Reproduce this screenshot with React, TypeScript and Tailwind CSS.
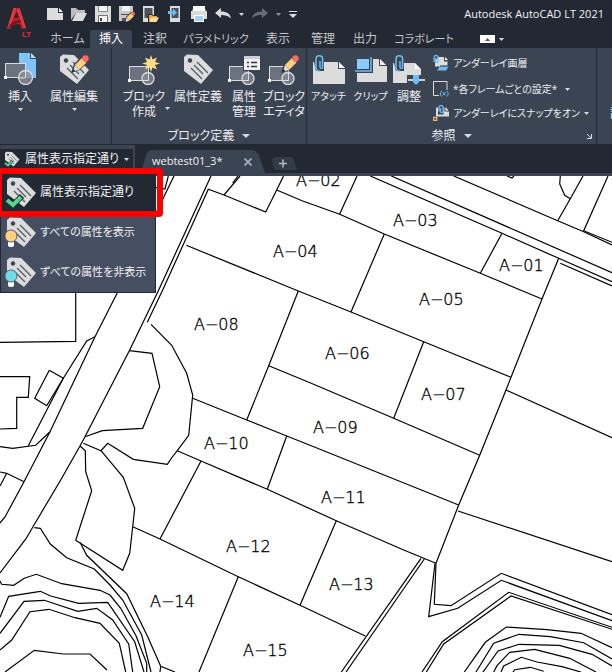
import type { ReactNode } from "react";

const tabs = [
  { label: "ホーム", width: "w-[45px]", text: "text-xs" },
  { label: "挿入", width: "w-[42px]", text: "text-xs", active: true },
  { label: "注釈", width: "w-[46px]", text: "text-xs" },
  { label: "パラメトリック", width: "w-[76px]", text: "text-[11px]" },
  { label: "表示", width: "w-12", text: "text-xs" },
  { label: "管理", width: "w-[42px]", text: "text-xs" },
  { label: "出力", width: "w-[42px]", text: "text-xs" },
  { label: "コラボレート", width: "w-[76px]", text: "text-[11px]" },
];

const lots = [
  { name: "A−02", x: 296, y: 186 },
  { name: "A−03", x: 393, y: 226 },
  { name: "A−01", x: 499, y: 271 },
  { name: "A−04", x: 273, y: 257 },
  { name: "A−05", x: 419, y: 305 },
  { name: "A−06", x: 325, y: 359 },
  { name: "A−08", x: 194, y: 330 },
  { name: "A−07", x: 421, y: 400 },
  { name: "A−09", x: 313, y: 433 },
  { name: "A−10", x: 204, y: 449 },
  { name: "A−11", x: 321, y: 503 },
  { name: "A−12", x: 226, y: 552 },
  { name: "A−13", x: 329, y: 590 },
  { name: "A−14", x: 150, y: 607 },
  { name: "A−15", x: 243, y: 656 },
];

// Roads and buildings west of the lots
const roads = [
  "211,176 158.7,290 129.3,350.7 85,436.7 80,446 60.7,480 33,526.7 26,538.7 0,573",
  "147.3,322.3 162.7,290 208.3,189.3 224,195 265.7,212 276.7,190 283.5,176",
  "224,195 240,176",
  "232.7,183 238,176",
  "174,176 116.7,294 95,336.7 50,431.7 24,481.7 5,517 0,523",
  "168.3,176 165,189 156,187.7",
  "95,336.7 86.7,341 63.3,378.3 28.3,445.7",
  "75.7,290 75.7,341.3 0,342.3",
  "0,376.7 29.7,376.7 28.3,397.3 16.7,397.3 16.7,428.3 0,429",
  "49.3,370.3 63.3,378.3 46.7,405.7 34.7,398.3 49.3,370.3",
  "0,446.7 12.7,448.3 35.7,445.3 50,431.7",
  "0,472 6.7,473.3 24,481.7",
  "6.7,473.3 0,486",
  "129.3,350.7 152,353.3 159.7,386.7 142.7,428.3 102.3,430.7 85,436.7",
  "151,324.3 171.7,345.3 186.7,373.3 192.7,395 188.7,435.3 177.3,450.7 172.3,457 167.3,464.3 133.3,459.3 107.7,443.3 101,450.7 83.3,443.3",
  "101,450.7 123.3,477.3 134.7,508.3 132.7,526.7 129.7,553.3 122.7,570.3 75.7,540.3 91.7,490.7 85.7,471.7 85.3,450.7 80,446",
];

const boundaries = [
  "276.7,190 302,200.7 339.7,214.3 384.3,234 480.3,273.3 542,299",
  "186.3,245.3 298.3,291 351,312 423.7,341.7 511,377.3",
  "384.3,234 351,312",
  "502,233.3 480.3,273.3",
  "357,176 339.7,214",
  "370.3,176 502,233.3 558.7,258.3 612,281.7",
  "391.3,176 612,272.7",
  "560.3,263.3 612,286",
  "453.7,176 557.7,220.7 583.7,231.7 612,245",
  "608,176 583.7,230.7 612,242.3",
  "557.7,220.7 570.3,198.7 583,176",
  "560.3,176 559.7,184 564.7,195.3 570.3,198.7",
  "507,176 512,178 514,176",
  "558.7,258.3 542,299 506,390 479.7,455.3 458.7,505 436,563.3",
  "298.3,291 268.7,365.7 246.7,420",
  "268.7,365.7 310,382.7 393.7,418.3 479.7,455.3",
  "423.7,341.7 393.7,418.3",
  "192.7,398.3 246.7,420 286.7,436 310,445.3 458.7,505",
  "286.7,436 267.3,489.3",
  "177.3,450.7 201,461 267.3,489.3 336.3,520.7 403.7,550 436,563.3",
  "201,461 160,539",
  "132.7,526.7 160,539 238.3,576.7 300,605.3 365.3,636",
  "238.3,576.7 199,672",
  "336.3,520.7 300,605.3",
  "506,390 612,437.7",
  "458,511 612,561.7",
  "421,558.3 341.3,672",
  "424.3,559 346,672",
];

const contours = [
  "436,563.3 434.3,604.3 451,605.7 501.3,573.3 612,614.7",
  "435,563.3 428.7,616.7 457.7,608.3 501.3,580.3 612,620.7",
  "422,672 442.3,641.7 508.7,592.3 612,627.3",
  "426.3,672 443.7,644 511,596 612,629.3",
  "464.3,672 485.3,642.3 506.3,627 547,629.7 581,633.3 612,647.7",
  "476,672 493.7,643.3 519,634.3 550.3,636.7 583.7,642.7 612,659",
  "483,672 498,651 519,644.3 559.3,645.3 592,654.3 612,666",
  "493.7,672 497,665.7 509.7,652.3 534.7,649.3 569.7,658.3 596,672",
  "501,672 503.7,666 521.3,657.3 537,662 562,666.7 581,672",
  "513,672 514.7,669.7 530.3,667.3 543.7,671.3",
  "34.3,527.7 40.3,528.3 50.3,544 66.7,557.7 94.3,569 110,585 122.7,600 141.7,635 151,672",
  "80,542.3 86.7,555.3 126.7,593.7 147.7,636.7 160.7,666.3 175,672",
  "160.7,666.3 160,672",
  "0,581 1.7,584.3 13.7,585.3 24.3,578.3 36.3,574.3 61.7,583.7 100,590.3 110,595 120.7,608.3 136,635.7 146.7,663.3 146.7,672",
  "0,617.3 8.7,596.3 40.3,591.3 50.7,596 78.7,603.3 107.7,602.3 134.7,641.7 144,672",
  "0,633.3 24,601.3 44.3,600.3 77.7,611.3 96.7,608.3 112.7,620 128.7,644 132.7,672",
  "0,650 11.7,640 30,611.7 49,609.3 75,617.7 100,623.3 119.3,643.3 125.7,672",
  "5,672 34.3,650.3 63.3,654 90,654 107,670",
];

const Caret = ({ className = "" }: { className?: string }) => (
  <svg viewBox="0 0 5 3" className={`w-[5px] h-[3px] shrink-0 fill-[#d8dadd] ${className}`}>
    <path d="M0 0h5L2.5 3z" />
  </svg>
);

const Icon = ({ children, className = "w-8 h-8" }: { children: ReactNode; className?: string }) => (
  <svg viewBox="0 0 32 32" fill="none" className={`shrink-0 ${className}`} aria-hidden="true">
    {children}
  </svg>
);

const BlockShape = () => (
  <>
    <rect x="1.5" y="13.5" width="19" height="14" fill="#6b7280" stroke="#dcdcdc" />
    <circle cx="20" cy="25.5" r="6" fill="#8a8f9a" fillOpacity=".75" stroke="#dcdcdc" strokeWidth="1.3" />
    <path d="M20.5 19v8.500H14" stroke="#dcdcdc" />
    <rect x="0" y="26" width="3" height="3" fill="#fff" />
  </>
);

const Pencil = () => (
  <>
    <path d="M13 20l3-9 9-9 6 6-9 9z" fill="#3b4453" />
    <path d="M17 12l7-7 4.500 4.500-7 7z" fill="#ffd07a" />
    <path d="M17 12l4.500 4.500-6.500 2.500z" fill="#dcdcdc" />
    <path d="M14 19.500l1.200-3.500 2.300 2.300z" fill="#222933" />
    <circle cx="27.500" cy="5.500" r="3.200" fill="#fa6868" />
  </>
);

const TagShape = () => (
  <>
    <path d="M2 4l3-2.500 11 .5L31 17 19 31 2 18z" fill="#dcdcdc" />
    <circle cx="8" cy="7.500" r="2.200" fill="#3b4453" />
    <path d="M15 9l11 11M12 12l9 9M9 15l11 11" stroke="#555c68" strokeWidth="1.300" />
  </>
);

const InsertIcon = () => (
  <Icon>
    <path d="M15 0h11v6h6v19H15z" fill="#7fc4fb" />
    <path d="M27 0l5 5h-5z" fill="#b8e0ff" />
    <rect x="1.500" y="10.500" width="20" height="14" fill="#6b7280" stroke="#dcdcdc" />
    <circle cx="21.500" cy="24.500" r="7" fill="#8a8f9a" fillOpacity=".8" stroke="#dcdcdc" strokeWidth="1.300" />
    <path d="M21.500 18v7H15" stroke="#dcdcdc" />
    <rect x="0" y="23" width="3" height="3" fill="#fff" />
  </Icon>
);

const EditTagIcon = () => (
  <Icon>
    <TagShape />
    <Pencil />
  </Icon>
);

const CreateBlockIcon = () => (
  <Icon>
    <BlockShape />
    <path
      d="M23 2l1.500 4.500L29 4.500 27 9l5 1.500-5 1.500 2 4.500-4.500-2L23 19l-1.500-4.500-4.500 2 2-4.500-5-1.500L19 9l-2-4.500 4.500 2z"
      fill="#ffdc8a"
    />
  </Icon>
);

const ManageIcon = () => (
  <Icon>
    <BlockShape />
    <rect x="15" y="2" width="17" height="16" fill="#3b4453" />
    <path d="M16 3h16v14H16z" fill="#f4f4f4" />
    <path d="M16 3h16v3H16z" fill="#d0d0d0" />
    <path d="M19 9.500h2M19 13.500h2M23 9.500h6M23 13.500h6" stroke="#30343c" strokeWidth="1.300" />
  </Icon>
);

const BlockEditorIcon = () => (
  <Icon>
    <BlockShape />
    <Pencil />
  </Icon>
);

const Clip = () => (
  <path
    d="M7 8v6a1.300 1.300 0 0 0 2.600 0V6a3.300 3.300 0 0 0-6.600 0v8.500a4 4 0 0 0 4 3.500"
    stroke="#6dbcf5"
    strokeWidth="1.500"
  />
);

const AttachIcon = () => (
  <Icon>
    <path d="M0 9h25v7h7v15H0z" fill="#dcdcdc" />
    <path d="M26 9l6 6h-6z" fill="#fff" />
    <path d="M1 9h10v9H3z" fill="#3b4453" />
    <Clip />
  </Icon>
);

const ClipIcon = () => (
  <Icon>
    <path d="M2 6h22v7h8v16H2z" fill="#dcdcdc" />
    <path d="M25 6l6 6h-6z" fill="#fff" />
    <path d="M0 5h18v15H0z" fill="#3b4453" />
    <path d="M2 6h12v10H2z" fill="#8ccaf9" />
    <path d="M16 4v14H0" stroke="#6dbcf5" strokeWidth="1.500" />
  </Icon>
);

const AdjustIcon = () => (
  <Icon>
    <path d="M0 10h22v6h6v14H0z" fill="#dcdcdc" />
    <path d="M22 10l6 6h-6z" fill="#fff" />
    <path d="M1 10h10v8H3z" fill="#3b4453" />
    <Clip />
    <path d="M14 22h18v10H14z" fill="#3b4453" />
    <path d="M15 27h17" stroke="#fff" strokeWidth="1.500" />
    <path d="M20 22h6v7l-3 3-3-3z" fill="#6dbcf5" />
  </Icon>
);

type ToolProps = { icon: ReactNode; lines: string[]; width: string; text?: string; caret?: boolean };

const Tool = ({ icon, lines, width, text = "text-xs", caret }: ToolProps) => (
  <button type="button" className={`flex flex-col items-center ${width}`}>
    {icon}
    <span className={`mt-1 whitespace-nowrap ${text}`}>
      {lines.map((line) => (
        <span key={line} className="block leading-[15px]">
          {line}
        </span>
      ))}
    </span>
    {caret && <Caret className="mt-1" />}
  </button>
);

const Panel = ({ title, children, corner }: { title?: string; children: ReactNode; corner?: boolean }) => (
  <section className="flex shrink-0 flex-col border-r border-[#222933]">
    <div className="flex h-[79px] pt-[5px]">{children}</div>
    {title && (
      <div className="relative flex h-[17px] items-center justify-center">
        <button type="button" className="flex items-center gap-2 text-xs leading-4">
          {title}
          <svg viewBox="0 0 8 4" className="w-2 h-1 fill-[#d8dadd]">
            <path d="M0 0h8L4 4z" />
          </svg>
        </button>
        {corner && (
          <svg viewBox="0 0 6 6" className="absolute right-1 w-[6px] h-[6px]" stroke="#d8dadd" fill="none">
            <path d="M1 1l4 4M5.500 1v4.500H1" />
          </svg>
        )}
      </div>
    )}
  </section>
);

const QuickIcon = ({ label, children, className = "w-4" }: { label: string; children: ReactNode; className?: string }) => (
  <button type="button" aria-label={label} className={`h-4 shrink-0 ${className}`}>
    <svg viewBox="0 0 16 16" fill="none" className="w-full h-4">
      {children}
    </svg>
  </button>
);

const QuickAccess = () => (
  <div className="flex items-center gap-2">
    <QuickIcon label="新規">
      <path d="M0 2h11v5h5v7H0z" fill="#dcdcdc" />
      <path d="M12 2l4 4h-4z" fill="#fff" />
    </QuickIcon>
    <QuickIcon label="開く">
      <path d="M0 14V2h5l2 2h7v3H5z" fill="#bdbdbd" />
      <path d="M5 7h11l-4 8H1z" fill="#dcdcdc" />
    </QuickIcon>
    <QuickIcon label="保存">
      <path d="M0 0h16v16H0z" fill="#dcdcdc" />
      <path d="M3 0h10v6H3z" fill="#8a8a8a" />
      <path d="M4 0h8v5H4z" fill="#f4f4f4" />
      <path d="M3 9h10v7H3z" fill="#777" />
      <path d="M4 10h8v6H4z" fill="#f4f4f4" />
      <path d="M5 12h2v3H5z" fill="#444" />
    </QuickIcon>
    <QuickIcon label="名前を付けて保存">
      <path d="M0 0h14v6l-6 9H0z" fill="#c9c9c9" />
      <path d="M3 0h8v5H3z" fill="#f4f4f4" />
      <path d="M2 8h9v1H2zM3 12h4v3H3z" fill="#555" />
      <path d="M6 16l1-5 5-5 4 4-5 5z" fill="#222933" />
      <path d="M7.500 11.500L12 7l3 3-4.500 4.500z" fill="#ffd07a" />
      <path d="M6.500 16l1-4.500 3 3z" fill="#dcdcdc" />
      <circle cx="14.300" cy="7.700" r="1.700" fill="#fa6868" />
    </QuickIcon>
    <QuickIcon label="Web およびモバイルから開く">
      <path d="M0 0h11v16H0z" fill="#dcdcdc" />
      <path d="M1.500 2h8v10h-8z" fill="#4c535f" />
      <path d="M5 16V8h4l1 1h5v3l1 0-3 4z" fill="#222933" />
      <path d="M6 15V9h3l1 1h4v2z" fill="#e0a94e" />
      <path d="M8 11.500h8L13.500 16H6z" fill="#ffd893" />
    </QuickIcon>
    <QuickIcon label="Web およびモバイルに保存">
      <path d="M3 0h10v16H3z" fill="#dcdcdc" />
      <path d="M4.500 2h7v10h-7z" fill="#4c535f" />
      <path d="M1 5h5V2.500L10 6.500 6 10.500V8H1z" fill="#6dbcf5" />
    </QuickIcon>
    <QuickIcon label="印刷">
      <path d="M2 0h12v5H2z" fill="#fff" />
      <path d="M0 5h16v8H0z" fill="#dcdcdc" />
      <path d="M1 3h1v2H1zM14 3h1v2h-1z" fill="#888" />
      <path d="M3 9h10v7H3z" fill="#fff" />
      <path d="M4 10h8v5H4z" fill="#a5d3f7" />
    </QuickIcon>
    <QuickIcon label="元に戻す">
      <path d="M0 7l6-5v3.500c6 0 9 2 10 7-3-3-6-3.500-10-3.500V12z" fill="#dcdcdc" />
    </QuickIcon>
    <Caret />
    <QuickIcon label="やり直し">
      <path d="M16 7l-6-5v3.500c-6 0-9 2-10 7 3-3 6-3.500 10-3.500V12z" fill="#666c75" />
    </QuickIcon>
    <Caret className="opacity-60" />
    <button type="button" aria-label="カスタマイズ" className="shrink-0">
      <svg viewBox="0 0 8 7" className="w-2 h-[7px] fill-[#dcdcdc]">
        <path d="M0 0h8v1H0zM0 3h8L4 7z" />
      </svg>
    </button>
  </div>
);

const Header = () => (
  <header className="flex bg-[#222933]">
    <button type="button" aria-label="アプリケーション メニュー" className="w-[45px] shrink-0 self-stretch">
      <svg viewBox="0 0 45 48" className="w-full h-12">
        <path d="M7 29L13.500 8h6L26 28l-4.500 1-1-4c-3-1.500-6-1-9 .5L10.500 29z" fill="#b81f27" />
        <path d="M14 18.500L16.500 12l2.500 6c-2-.5-3.500-.3-5 .5z" fill="#222933" />
        <path d="M13.500 8h3L11 24l-4 5z" fill="#dd4044" />
        <path d="M8 28c5-5 10-6 16-5.500l-.5-2C18 19.500 13 21 10 24.500z" fill="#7d1018" />
        <path d="M19.500 8L26 28l-2.500.5L17 10z" fill="#e23a3f" />
        <text x="22" y="37" fontSize="8" fontWeight="700" fill="#dd2b31" fontFamily="Liberation Sans">
          LT
        </text>
      </svg>
    </button>
    <div className="min-w-0 flex-1">
      <div className="flex h-7 items-center justify-between pl-[2px] pr-2">
        <QuickAccess />
        <h1 className="whitespace-nowrap text-[11px] text-[#f2f2f2]">Autodesk AutoCAD LT 2021</h1>
      </div>
      <nav className="flex h-5 items-end">
        {tabs.map((tab) => (
          <button
            key={tab.label}
            type="button"
            className={`h-[18px] shrink-0 whitespace-nowrap text-center leading-4 ${tab.text} ${tab.width} ${
              tab.active ? "rounded-t-xs bg-[#3b4453] text-white" : "text-[#c2c5c9]"
            }`}
          >
            {tab.label}
          </button>
        ))}
        <button type="button" aria-label="リボンを最小化" className="mb-[5px] ml-[18px] flex items-center gap-1">
          <svg viewBox="0 0 15 8" className="w-[15px] h-2">
            <path d="M0 0h15v8H0z" fill="#fff" />
            <path d="M5 6h5L7.500 3z" fill="#555" />
          </svg>
          <Caret />
        </button>
      </nav>
    </div>
  </header>
);

const Ribbon = () => (
  <div className="flex overflow-hidden border-b border-[#222933] bg-[#3b4453] text-[#eceef0]">
    <Panel>
      <Tool icon={<InsertIcon />} lines={["挿入"]} width="w-10" caret />
      <Tool icon={<EditTagIcon />} lines={["属性編集"]} width="w-[68px]" caret />
      <div className="w-[3px]" />
    </Panel>
    <Panel title="ブロック定義">
      <div className="ml-[11px] flex items-start">
        <Tool icon={<CreateBlockIcon />} lines={["ブロック", "作成"]} width="w-[42px]" />
        <Caret className="mt-[54px]" />
      </div>
      <Tool
        icon={
          <Icon>
            <TagShape />
          </Icon>
        }
        lines={["属性定義"]}
        width="w-14"
      />
      <Tool icon={<ManageIcon />} lines={["属性", "管理"]} width="w-9" />
      <Tool icon={<BlockEditorIcon />} lines={["ブロック", "エディタ"]} width="w-11" />
    </Panel>
    <Panel title="参照" corner>
      <Tool icon={<AttachIcon />} lines={["アタッチ"]} width="w-[43px]" text="text-[10px]" />
      <Tool icon={<ClipIcon />} lines={["クリップ"]} width="w-[41px]" text="text-[10px]" />
      <Tool icon={<AdjustIcon />} lines={["調整"]} width="w-9" />
      <div className="flex w-[169px] flex-col pl-[6px] text-[10px]">
        <button type="button" className="flex h-6 items-center gap-1 whitespace-nowrap pb-1">
          <Icon className="w-4 h-4">
            <path d="M10 4h12v9h7v10H4V12z" fill="#dcdcdc" />
            <path d="M24 4l6 6h-6z" fill="#fff" />
            <path d="M2 14V5a4 4 0 0 1 8 0v9a3 3 0 0 1-5 0V6" stroke="#6dbcf5" strokeWidth="2.500" />
            <path d="M14 22h18l-6 9H8z" fill="#6dbcf5" />
            <path d="M14 22h18" stroke="#222933" strokeWidth="2" />
          </Icon>
          アンダーレイ画層
        </button>
        <button type="button" className="flex h-6 items-center gap-1 whitespace-nowrap">
          <Icon className="w-4 h-4">
            <path d="M12 29H1V1h27v17" stroke="#dcdcdc" strokeWidth="2" />
            <path d="M17 20c-3 3-3 8 0 11M28 20c3 3 3 8 0 11M19 22l6 7M25 22l-6 7" stroke="#6dbcf5" strokeWidth="2" />
          </Icon>
          *各フレームごとの設定*
          <Caret className="ml-1" />
        </button>
        <button type="button" className="flex h-6 items-center gap-1 whitespace-nowrap">
          <Icon className="w-4 h-4">
            <path d="M6 5h17v8h9v10H6z" fill="#dcdcdc" />
            <path d="M25 4l6 7h-6z" fill="#fff" />
            <path d="M10 4h11v15H10z" fill="#3b4453" />
            <path d="M12 13V5a4 4 0 0 1 8 0v9a3 3 0 0 1-5 0V6" stroke="#6dbcf5" strokeWidth="2.500" />
            <path d="M1.500 24.500h6v6h-6z" stroke="#ffb870" strokeWidth="2.500" />
          </Icon>
          アンダーレイにスナップをオン
          <Caret />
        </button>
      </div>
    </Panel>
    <div className="flex-1 overflow-hidden pt-[58px] pl-[13px] text-xs leading-[15px]">詳</div>
  </div>
);

const CheckTag = ({ className = "w-8 h-8" }: { className?: string }) => (
  <Icon className={className}>
    <TagShape />
    <path d="M2 24l6 5 9-9" stroke="#222933" strokeWidth="6" />
    <path d="M2 24l6 5 8-8" stroke="#52d68a" strokeWidth="4" />
  </Icon>
);

const BulbTag = ({ bulb }: { bulb: ReactNode }) => (
  <Icon>
    <TagShape />
    <rect x="3" y="25" width="6" height="6" rx="2" fill="#fff" />
    {bulb}
  </Icon>
);

const options = [
  { label: "属性表示指定通り", icon: <CheckTag />, selected: true },
  {
    label: "すべての属性を表示",
    icon: <BulbTag bulb={<circle cx="6" cy="20" r="6" fill="#ffd07a" stroke="#5e6470" />} />,
  },
  {
    label: "ずべての属性を非表示",
    icon: <BulbTag bulb={<circle cx="6" cy="20" r="6" fill="#6edbe8" stroke="#5e6470" />} />,
  },
];

const AttributeMenu = () => (
  <div className="absolute left-0 top-[26px] z-10">
    <ul className="w-[156px] border border-[#222933] bg-[#454f61]">
      {options.map((option) => (
        <li key={option.label}>
          <button
            type="button"
            className={`flex h-10 w-full items-center gap-[3px] whitespace-nowrap pl-1 text-[#f2f2f2] ${
              option.selected ? "bg-[#222933] text-xs" : "text-[11px]"
            }`}
          >
            {option.icon}
            {option.label}
          </button>
        </li>
      ))}
    </ul>
    <div className="pointer-events-none absolute -left-1 -top-[3px] h-[49px] w-[167px] rounded-sm border-[6px] border-[#ff0000]" />
  </div>
);

const FileTabs = () => (
  <div className="flex h-[31px] bg-[#222933]">
    <div className="relative w-[135px] shrink-0 bg-[#3b4453] pt-1 pr-[2px]">
      <button
        type="button"
        className="flex h-5 w-full items-center gap-[5px] whitespace-nowrap bg-[#222933] pl-1 text-xs leading-4 text-[#f2f2f2]"
      >
        <CheckTag className="w-4 h-4" />
        属性表示指定通り
        <Caret />
      </button>
      <AttributeMenu />
    </div>
    <div className="flex flex-1 items-end border-b-[3px] border-[#3b4453]">
      <div className="relative ml-[6px] flex h-[23px] w-[124px] items-center justify-between pl-[11px] pr-[13px] text-[11px] text-[#f2f2f2]">
        <svg viewBox="0 0 124 23" className="absolute inset-0 h-full w-full fill-[#3b4453]" preserveAspectRatio="none">
          <path d="M0 23L5 5Q7 0 12 0h98q6 0 8 6l6 17z" />
        </svg>
        <span className="relative">webtest01_3*</span>
        <button type="button" aria-label="閉じる" className="relative">
          <svg viewBox="0 0 8 8" className="h-2 w-2" stroke="#a6abb2" strokeWidth="1.800">
            <path d="M.5.5l7 7M7.500.5l-7 7" />
          </svg>
        </button>
      </div>
      <button type="button" aria-label="新しいタブ" className="ml-1">
        <svg viewBox="0 0 28 19" className="h-[19px] w-7">
          <path d="M3 5Q4 3 8 3h13q3 0 4 4l3 9H9q-4 0-5-4z" fill="#333b48" />
          <path d="M10 9.500h8M14 5.500v8" stroke="#b5b9be" strokeWidth="1.600" />
        </svg>
      </button>
    </div>
  </div>
);

const SitePlan = () => (
  <main className="bg-white">
    <svg viewBox="0 176 612 496" className="block w-full" role="img" aria-label="区画図">
      <g fill="none" stroke="#000" strokeWidth="1.200">
        {[...roads, ...boundaries, ...contours].map((points) => (
          <polyline key={points} points={points} />
        ))}
      </g>
      <g className="font-['DejaVu_Sans'] font-extralight" fontSize="16" fill="#000" stroke="#000" strokeWidth=".35">
        {lots.map((lot) => (
          <text key={lot.name} x={lot.x} y={lot.y}>
            {lot.name}
          </text>
        ))}
      </g>
    </svg>
  </main>
);

const App = () => {
  return (
    <div className="min-h-screen overflow-hidden bg-white font-['Open_Sans','Noto_Sans_CJK_JP',sans-serif] [font-feature-settings:'palt']">
      <Header />
      <Ribbon />
      <FileTabs />
      <SitePlan />
    </div>
  );
};

export default App;
